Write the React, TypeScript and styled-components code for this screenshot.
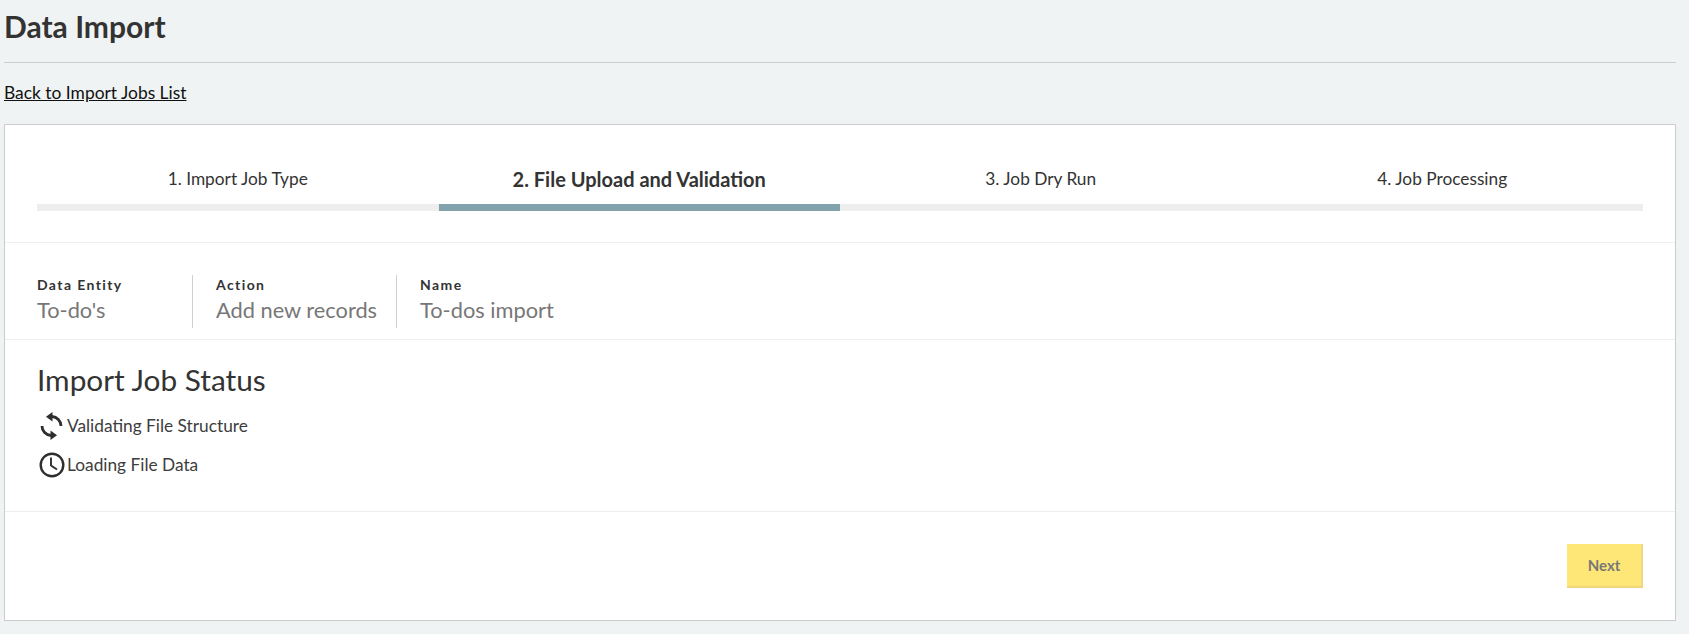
import React from 'react'
import styled, { createGlobalStyle } from 'styled-components'

const GlobalStyle = createGlobalStyle`
  html, body { margin: 0; padding: 0; background: #f0f3f4; }
  body { font-family: Lato, "Open Sans", sans-serif; color: #333; }
`

const Page = styled.div`
  padding: 0 13px 13px 4px;
`

const Title = styled.h1`
  margin: 0;
  height: 63px;
  box-sizing: border-box;
  padding-top: 8px;
  border-bottom: 1px solid #c9cdcf;
  font-size: 30px;
  line-height: 36px;
  font-weight: 700;
  color: #333;
`

const BackLink = styled.a`
  display: block;
  margin-top: 19px;
  margin-bottom: 20px;
  font-size: 17.4px;
  line-height: 22px;
  color: #111;
  text-decoration: underline;
`

const Card = styled.section`
  height: 497px;
  box-sizing: border-box;
  border: 1px solid #cccccc;
  background: #fff;
  display: flex;
  flex-direction: column;
`

const Steps = styled.div`
  height: 118px;
  box-sizing: border-box;
  padding: 29px 32px 0;
  display: flex;
  border-bottom: 1px solid #eeeeee;
`

const Step = styled.div<{ $active?: boolean }>`
  flex: 1;
  height: 57px;
  box-sizing: border-box;
  border-bottom: 7px solid ${p => (p.$active ? '#83a3ac' : '#eeeeee')};
  text-align: center;
  font-size: ${p => (p.$active ? '20px' : '17.3px')};
  font-weight: ${p => (p.$active ? 700 : 400)};
  line-height: 50px;
  color: #333;
`

const Meta = styled.div`
  height: 97px;
  box-sizing: border-box;
  padding: 32px 32px 0;
  display: flex;
  border-bottom: 1px solid #eeeeee;
`

const MetaItem = styled.div`
  height: 53px;
  padding-right: 19px;
  margin-right: 23px;
  border-right: 1px solid #cfcfcf;
  &:first-child { width: 136px; }
  &:last-child { border-right: none; }
`

const MetaLabel = styled.div`
  font-size: 14px;
  line-height: 20px;
  font-weight: 700;
  letter-spacing: 1.4px;
  color: #333;
`

const MetaValue = styled.div`
  margin-top: 1px;
  font-size: 21.8px;
  line-height: 28px;
  color: #777;
`

const Status = styled.div`
  height: 172px;
  box-sizing: border-box;
  padding: 22px 32px 0;
  border-bottom: 1px solid #eeeeee;
`

const StatusTitle = styled.h2`
  margin: 0 0 8px;
  font-size: 29.8px;
  line-height: 36px;
  font-weight: 400;
  color: #333;
`

const StatusRow = styled.div`
  display: flex;
  align-items: center;
  height: 39px;
  font-size: 17.3px;
  color: #3d3d3d;
`

const IconSlot = styled.span`
  width: 30px;
  display: flex;
  justify-content: center;
  color: #2e2e2e;
`

const Footer = styled.div`
  flex: 1;
  display: flex;
  justify-content: flex-end;
  padding: 32px 32px 0;
`

const NextButton = styled.button`
  width: 76px;
  height: 44px;
  border: none;
  border-right: 2px solid #f0d77f;
  border-bottom: 2px solid #f0d77f;
  background: #ffe777;
  color: #777;
  font-family: inherit;
  font-size: 15px;
  font-weight: 700;
`

const SyncIcon = () => (
  <svg width="24" height="30" viewBox="0 0 24 30" fill="none" stroke="currentColor" strokeWidth="2.8">
    <path d="M21 15A9.500 9.500 0 0 0 12 5.500" />
    <path d="M2 15A9.500 9.500 0 0 0 11 24.500" />
    <path d="M12.500 1v9.500L6 5.750z" fill="currentColor" stroke="none" />
    <path d="M10.500 19.500V29l6.500-4.750z" fill="currentColor" stroke="none" />
  </svg>
)

const ClockIcon = () => (
  <svg width="26" height="26" viewBox="0 0 26 26" fill="none" stroke="currentColor">
    <circle cx="13" cy="13" r="11.3" strokeWidth="2.4" />
    <path d="M12 5.500V13.500l6 4" strokeWidth="1.9" />
  </svg>
)

const steps = ['1. Import Job Type', '2. File Upload and Validation', '3. Job Dry Run', '4. Job Processing']

const meta = [
  { label: 'Data Entity', value: "To-do's" },
  { label: 'Action', value: 'Add new records' },
  { label: 'Name', value: 'To-dos import' },
]

const App: React.FC = () => (
  <React.Fragment>
    <GlobalStyle />
    <Page>
      <Title>Data Import</Title>
      <BackLink href="#">Back to Import Jobs List</BackLink>
      <Card>
        <Steps>
          {steps.map((s, i) => (
            <Step key={s} $active={i === 1}>{s}</Step>
          ))}
        </Steps>
        <Meta>
          {meta.map(m => (
            <MetaItem key={m.label}>
              <MetaLabel>{m.label}</MetaLabel>
              <MetaValue>{m.value}</MetaValue>
            </MetaItem>
          ))}
        </Meta>
        <Status>
          <StatusTitle>Import Job Status</StatusTitle>
          <StatusRow><IconSlot><SyncIcon /></IconSlot>Validating File Structure</StatusRow>
          <StatusRow><IconSlot><ClockIcon /></IconSlot>Loading File Data</StatusRow>
        </Status>
        <Footer>
          <NextButton>Next</NextButton>
        </Footer>
      </Card>
    </Page>
  </React.Fragment>
)

export default App
